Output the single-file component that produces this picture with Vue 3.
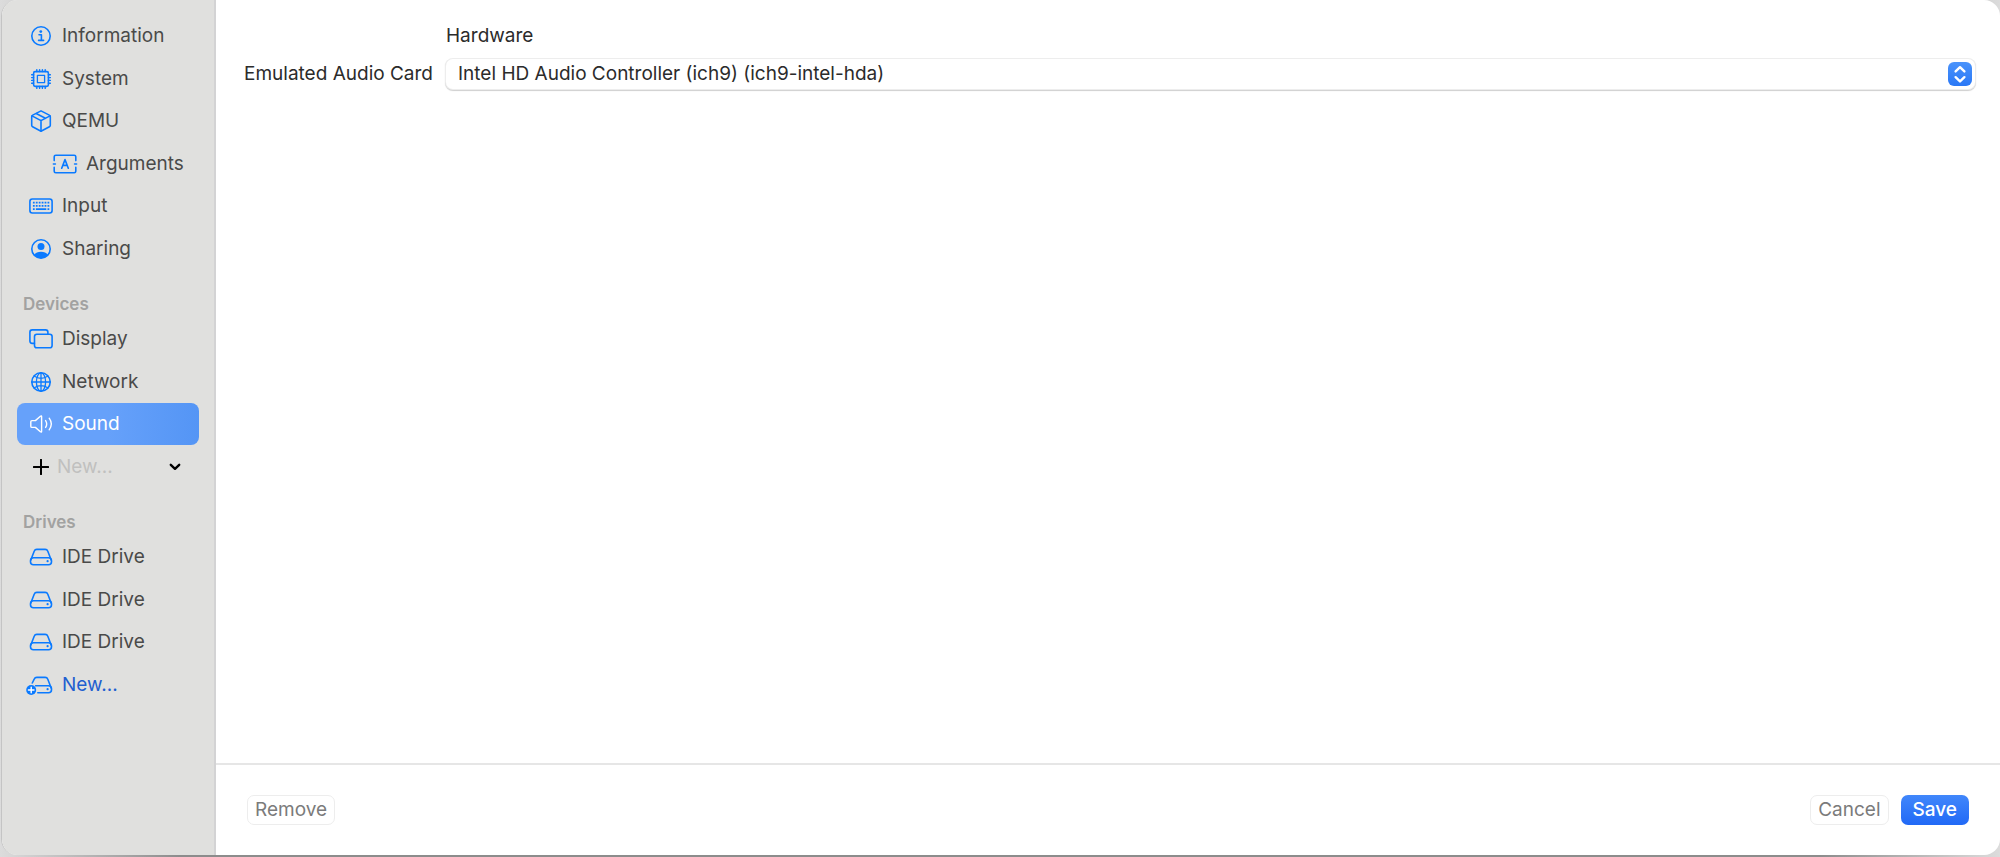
<template>
  <div class="desktop">
    <div class="window">
      <nav class="sidebar">
        <ul class="nav-list general">
          <li v-for="item in general" :key="item.label">
            <a href="#" :class="['nav-item', item.nested ? 'nested' : '']">
              <svg class="nav-icon" width="24" height="24" viewBox="0 0 24 24" v-html="icons[item.icon]"></svg>
              <span>{{ item.label }}</span>
            </a>
          </li>
        </ul>

        <h2 class="nav-heading">Devices</h2>
        <ul class="nav-list">
          <li v-for="item in devices" :key="item.label">
            <a
              href="#"
              :class="['nav-item', selected === item.label ? 'selected' : '']"
              @click.prevent="selected = item.label">
              <svg class="nav-icon" width="24" height="24" viewBox="0 0 24 24" v-html="icons[item.icon]"></svg>
              <span>{{ item.label }}</span>
            </a>
          </li>
          <li class="new-device">
            <label for="new-device">
              <svg class="plus" width="16" height="16" viewBox="0 0 16 16">
                <path d="M8 0.8v14.4M0.8 8h14.4" />
              </svg>
            </label>
            <select id="new-device" aria-label="New...">
              <option>New...</option>
            </select>
            <svg class="chevron" width="12" height="8" viewBox="0 0 12 8">
              <path d="M1.8 1.8L6 5.8l4.2-4" />
            </svg>
          </li>
        </ul>

        <h2 class="nav-heading">Drives</h2>
        <ul class="nav-list">
          <li v-for="n in 3" :key="n">
            <a href="#" class="nav-item">
              <svg class="nav-icon" width="24" height="24" viewBox="0 0 24 24" v-html="icons.drive"></svg>
              <span>IDE Drive</span>
            </a>
          </li>
          <li>
            <button type="button" class="nav-item new-drive">
              <svg class="nav-icon" width="24" height="24" viewBox="0 0 24 24" v-html="icons.driveAdd"></svg>
              <span>New...</span>
            </button>
          </li>
        </ul>
      </nav>

      <div class="main">
        <form class="settings" @submit.prevent>
          <h1 class="section-title">Hardware</h1>
          <label class="field-label" for="audio-card">Emulated Audio Card</label>
          <div class="popup">
            <select id="audio-card" v-model="card">
              <option v-for="c in cards" :key="c">{{ c }}</option>
            </select>
            <span class="popup-arrows">
              <svg width="24" height="24" viewBox="0 0 24 24">
                <path d="M7.6 9.4L12 5.2l4.4 4.2M7.6 15.2l4.4 4.2 4.4-4.2" />
              </svg>
            </span>
          </div>
        </form>

        <footer class="footer">
          <button type="button" class="btn">Remove</button>
          <div class="footer-actions">
            <button type="button" class="btn">Cancel</button>
            <button type="button" class="btn primary">Save</button>
          </div>
        </footer>
      </div>
    </div>
  </div>
</template>

<script setup>
import {ref} from "vue";

const selected = ref("Sound");

const cards = ["Intel HD Audio Controller (ich9) (ich9-intel-hda)"];
const card = ref(cards[0]);

const general = [
  {label: "Information", icon: "info"},
  {label: "System", icon: "cpu"},
  {label: "QEMU", icon: "box"},
  {label: "Arguments", icon: "argument", nested: true},
  {label: "Input", icon: "keyboard"},
  {label: "Sharing", icon: "person"},
];

const devices = [
  {label: "Display", icon: "display"},
  {label: "Network", icon: "globe"},
  {label: "Sound", icon: "speaker"},
];

// inner markup of the 24x24 sidebar icons
const icons = {
  info: `
    <circle cx="12" cy="12" r="9.2" />
    <circle cx="11.8" cy="7.6" r="1.4" fill="currentColor" stroke="none" />
    <path d="M10 10.8h2.4v5.4M9.6 16.4h5" />`,
  cpu: `
    <rect x="4.6" y="4.6" width="14.8" height="14.8" rx="1.6" />
    <rect x="8.4" y="8.4" width="7.2" height="7.2" stroke-width="1.3" />
    <path d="M7.8 2.6v2M10.6 2.6v2M13.4 2.6v2M16.2 2.6v2M7.8 19.4v2M10.6 19.4v2M13.4 19.4v2M16.2 19.4v2M2.6 7.8h2M2.6 10.6h2M2.6 13.4h2M2.6 16.2h2M19.4 7.8h2M19.4 10.6h2M19.4 13.4h2M19.4 16.2h2" stroke-width="1.4" />`,
  box: `
    <path d="M12 1.9l8.3 4.2q1 .5 1 1.6v8.6q0 1-.9 1.5L12 22.3l-8.4-4.5q-.9-.5-.9-1.5V7.7q0-1.1 1-1.6z" />
    <path d="M3 6.9l9 4.7 9-4.7M12 11.6v10.5M7.2 4.5l9.2 4.8" />`,
  argument: `
    <path d="M1.2 8.6V4.8q0-1.6 1.6-1.6h18.400q1.600 0 1.600 1.600v3.800M1.200 15.400v3.800q0 1.600 1.600 1.600h18.400q1.600 0 1.600-1.600v-3.800M.4 12h2M21.600 12h2" />
    <path d="M8.700 16.200L12 7.600l3.300 8.600M9.800 13.400h4.400" />`,
  keyboard: `
    <rect x=".9" y="5" width="22.2" height="14" rx="2.4" />
    <path d="M3.9 8.700h16.400M3.900 11.900h16.400" stroke-width="1.800" stroke-dasharray="1.800 1.120" stroke-linecap="butt" />
    <path d="M3.900 15.200h1.800M6.900 15.200h10.400M18.500 15.200h1.800" stroke-width="1.700" stroke-linecap="butt" />`,
  person: `
    <circle cx="12" cy="12" r="9.2" />
    <circle cx="12" cy="9.4" r="3.5" fill="currentColor" stroke="none" />
    <path d="M5 17.800q2.400-3 7-3t7 3q-2.800 3.400-7 3.400t-7-3.400z" fill="currentColor" stroke="none" />`,
  display: `
    <path d="M5.400 16.400H3.200q-2.300 0-2.300-2.300V5.200q0-2.300 2.300-2.300h13.400q2.300 0 2.300 2.300v1.900" />
    <rect x="5.500" y="7.200" width="17.600" height="13.600" rx="2.300" />`,
  globe: `
    <circle cx="12" cy="12" r="9.2" />
    <path d="M12 2.8v18.400M2.800 12h18.400M5 6q7 4.600 14 0M5 18q7-4.600 14 0" stroke-width="1.300" />
    <ellipse cx="12" cy="12" rx="4.600" ry="9.200" stroke-width="1.300" />`,
  speaker: `
    <path d="M3 8.600h3.400l5-4.400q1.200-.9 1.200.6v14.400q0 1.500-1.200.6l-5-4.400H3q-1.200 0-1.200-1.200V9.800Q1.800 8.600 3 8.600z" stroke-width="1.400" />
    <path d="M16.600 8.600q2.200 3.400 0 6.800M20.200 6.200q4.200 5.800 0 11.600" stroke-width="1.400" />`,
  drive: `
    <path d="M1.800 15L5.200 6.200q.7-1.800 2.600-1.800h8.400q1.900 0 2.600 1.800L22.200 15" />
    <rect x="1.500" y="12.800" width="21" height="6.900" rx="3" />
    <circle cx="18.600" cy="16.200" r="1.100" fill="currentColor" stroke="none" />`,
  driveAdd: `
    <path d="M3.300 10L5.200 6.200q.7-1.800 2.600-1.800h8.400q1.900 0 2.600 1.800L22.200 15" />
    <path d="M6.600 12.800h12.900q3 0 3 3v.9q0 3-3 3H8.800" />
    <circle cx="18.600" cy="16.200" r="1.100" fill="currentColor" stroke="none" />
    <circle cx="2.200" cy="17" r="5" fill="currentColor" stroke="none" />
    <path d="M2.200 14.200v5.600M-.6 17h5.600" stroke="#fff" stroke-width="1.400" />`,
};
</script>

<style>
body {
  margin: 0;
}
</style>

<style scoped>
.desktop {
  box-sizing: border-box;
  display: flex;
  min-height: 100vh;
  padding: 0 0 2px 1px;
  background: linear-gradient(90deg, #dcdcdc, #8c8c8c 9%, #8c8c8c 91%, #dcdcdc);
  font-family: Inter, "Liberation Sans", sans-serif;
  font-size: 19px;
  line-height: 24px;
  color: #2b2b2b;
}
.window {
  flex: 1;
  display: flex;
  overflow: hidden;
  border-left: 1px solid #c4c4c4;
  border-radius: 16px;
  background: #fff;
}

.sidebar {
  box-sizing: border-box;
  flex: 0 0 214px;
  padding: 15px 15px 0;
  border-right: 2px solid #d3d3d4;
  background: #e0e0de;
}
.nav-list {
  display: grid;
  align-items: center;
  min-height: 170px;
  margin: 0;
  padding: 0;
  list-style: none;
}
.nav-list.general {
  min-height: 255px;
}
.nav-item {
  box-sizing: border-box;
  display: flex;
  align-items: center;
  gap: 9px;
  width: 100%;
  height: 42px;
  padding: 0 12px;
  border-radius: 8px;
  color: #4a4a49;
  text-decoration: none;
}
.nav-item.nested {
  padding-left: 36px;
}
.nav-item.selected {
  background: linear-gradient(90deg, #66a1fa 50%, #5495f5);
  color: #fff;
}
.nav-icon {
  flex: none;
  overflow: visible;
  fill: none;
  stroke: currentColor;
  stroke-width: 1.6;
  stroke-linecap: round;
  stroke-linejoin: round;
  color: #0a7aff;
}
.selected .nav-icon {
  color: #fff;
}
.nav-heading {
  margin: 22px 0 2px;
  padding-left: 6px;
  font-size: 17px;
  font-weight: 600;
  line-height: 24px;
  color: #a2a2a1;
}
.new-device {
  position: relative;
  display: flex;
  align-items: center;
  height: 42px;
}
.new-device label {
  display: flex;
  padding: 0 8px 0 16px;
}
.plus,
.chevron {
  fill: none;
  stroke: #000;
  stroke-width: 2;
  stroke-linecap: round;
  stroke-linejoin: round;
}
.new-device select {
  flex: 1;
  min-width: 0;
  padding: 0;
  border: none;
  appearance: none;
  background: none;
  font: inherit;
  color: #c0c0bf;
}
.chevron {
  position: absolute;
  right: 18px;
  stroke-width: 2.4;
  pointer-events: none;
}
.new-drive {
  border: none;
  background: none;
  font: inherit;
  color: #1f5fd0;
  text-align: left;
  cursor: pointer;
}

.main {
  flex: 1;
  min-width: 0;
  display: flex;
  flex-direction: column;
}
.settings {
  flex: 1;
  display: grid;
  grid-template-columns: minmax(193px, auto) 1fr;
  align-content: start;
  align-items: center;
  gap: 11px 13px;
  padding: 24px 25px 24px 24px;
}
.section-title {
  grid-column: 2;
  margin: 0;
  font-size: inherit;
  font-weight: 400;
}
.field-label {
  text-align: right;
}
.popup {
  position: relative;
  display: flex;
}
.popup select {
  flex: 1;
  min-width: 0;
  height: 30px;
  padding: 0 40px 0 12px;
  border: none;
  border-radius: 7px;
  appearance: none;
  background: #fff;
  box-shadow: 0 0 0 1px #ededed, 0 1px 1px 1px #cfcfcf;
  font: inherit;
  color: inherit;
}
.popup-arrows {
  position: absolute;
  top: 3px;
  right: 3px;
  display: flex;
  border-radius: 6px;
  background: linear-gradient(#4a93fb, #2a78f6);
  pointer-events: none;
}
.popup-arrows svg {
  fill: none;
  stroke: #fff;
  stroke-width: 2.4;
  stroke-linecap: round;
  stroke-linejoin: round;
}

.footer {
  display: flex;
  align-items: center;
  justify-content: space-between;
  padding: 30px 31px;
  border-top: 2px solid #e6e6e6;
}
.footer-actions {
  display: flex;
  gap: 12px;
}
.btn {
  height: 30px;
  padding: 0 7px;
  border: 1px solid #ededed;
  border-radius: 7px;
  background: #fff;
  font: inherit;
  color: #7b7b7b;
  cursor: pointer;
}
.btn.primary {
  padding: 0 12px;
  border: none;
  background: linear-gradient(#4187fb, #2169f6);
  font-weight: 500;
  color: #fff;
}
</style>
